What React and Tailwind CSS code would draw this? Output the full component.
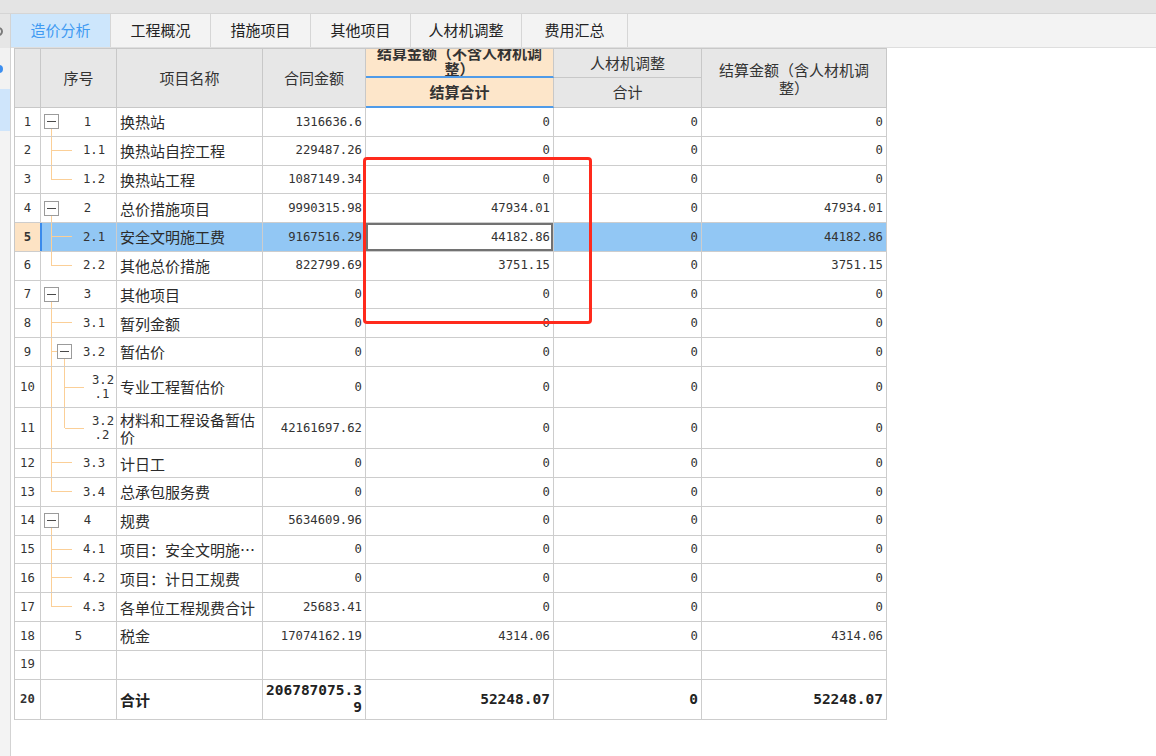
import React from 'react';

const MONO = "font-['DejaVu_Sans_Mono',monospace]";
const CELL = 'border-r border-b border-[#cdcdcd]';
const HEAD = 'border-r border-b border-[#c8c8c8] bg-[#e7e7e7] flex items-center justify-center text-center text-[15px] text-[#333]';
const PEACH = 'border-r border-b-2 border-r-[#c8c8c8] border-b-[#4f9be9] bg-[#fde6ca] flex items-center justify-center text-center text-[15px] font-bold text-[#333] overflow-hidden';

const tabs = [
  { label: '造价分析', w: 'w-[100px]', active: true },
  { label: '工程概况', w: 'w-[100px]' },
  { label: '措施项目', w: 'w-[100px]' },
  { label: '其他项目', w: 'w-[100px]' },
  { label: '人材机调整', w: 'w-[111px]' },
  { label: '费用汇总', w: 'w-[106px]' },
];

// t: root = 一级带折叠框, child = 二级叶子, childBox = 二级带折叠框, grand = 三级叶子, leaf = 一级叶子
const rows = [
  { no: 1, seq: '1', t: 'root', name: '换热站', amt: '1316636.6' },
  { no: 2, seq: '1.1', t: 'child', name: '换热站自控工程', amt: '229487.26' },
  { no: 3, seq: '1.2', t: 'child', last: true, name: '换热站工程', amt: '1087149.34' },
  { no: 4, seq: '2', t: 'root', name: '总价措施项目', amt: '9990315.98', a: '47934.01', c: '47934.01' },
  { no: 5, seq: '2.1', t: 'child', name: '安全文明施工费', amt: '9167516.29', a: '44182.86', c: '44182.86', sel: true },
  { no: 6, seq: '2.2', t: 'child', last: true, name: '其他总价措施', amt: '822799.69', a: '3751.15', c: '3751.15' },
  { no: 7, seq: '3', t: 'root', name: '其他项目', amt: '0' },
  { no: 8, seq: '3.1', t: 'child', name: '暂列金额', amt: '0' },
  { no: 9, seq: '3.2', t: 'childBox', name: '暂估价', amt: '0' },
  { no: 10, seq: ['3.2', '.1'], t: 'grand', name: '专业工程暂估价', amt: '0' },
  { no: 11, seq: ['3.2', '.2'], t: 'grand', last: true, name: '材料和工程设备暂估价', amt: '42161697.62' },
  { no: 12, seq: '3.3', t: 'child', name: '计日工', amt: '0' },
  { no: 13, seq: '3.4', t: 'child', last: true, name: '总承包服务费', amt: '0' },
  { no: 14, seq: '4', t: 'root', name: '规费', amt: '5634609.96' },
  { no: 15, seq: '4.1', t: 'child', name: '项目：安全文明施工费', amt: '0' },
  { no: 16, seq: '4.2', t: 'child', name: '项目：计日工规费', amt: '0' },
  { no: 17, seq: '4.3', t: 'child', last: true, name: '各单位工程规费合计', amt: '25683.41' },
  { no: 18, seq: '5', t: 'leaf', name: '税金', amt: '17074162.19', a: '4314.06', c: '4314.06' },
  { no: 19, t: 'empty', name: '', amt: '', a: '', b: '', c: '' },
  { no: 20, t: 'empty', name: '合计', amt: '206787075.39', a: '52248.07', c: '52248.07', total: true },
];

function TreeLines({ t, last }) {
  const A = 10.5;
  const B = 23.5;
  let segs = [];
  if (t === 'root') {
    segs = [[A, '50%', A, '100%']];
  } else if (t === 'child') {
    segs = [[A, '0', A, last ? '50%' : '100%'], [A, '50%', 31, '50%']];
  } else if (t === 'childBox') {
    segs = [[A, '0', A, '100%'], [A, '50%', 16, '50%'], [B, '50%', B, '100%']];
  } else if (t === 'grand') {
    segs = [[A, '0', A, '100%'], [B, '0', B, last ? '50%' : '100%'], [B, '50%', 43, '50%']];
  }
  if (!segs.length) return null;
  return (
    <svg className="absolute inset-0 h-full w-full" shapeRendering="crispEdges">
      {segs.map(([x1, y1, x2, y2], i) => (
        <line key={i} x1={x1} y1={y1} x2={x2} y2={y2} stroke="#fbcf97" strokeWidth="1" />
      ))}
    </svg>
  );
}

function FoldBox() {
  return (
    <span className="relative flex h-[15px] w-[15px] shrink-0 items-center justify-center border border-[#9b9b9b] bg-white">
      <span className="h-px w-[9px] bg-[#4a4a4a]" />
    </span>
  );
}

function TreeCell({ row }) {
  const { t, seq, last, sel } = row;
  const bg = sel ? 'bg-[#92c7f4]' : 'bg-white';
  return (
    <div className={`${CELL} ${bg} relative flex items-center ${MONO} text-[12.25px] text-[#333]`}>
      {sel && <span className="absolute -left-px top-0 bottom-0 w-[2px] bg-[#3a8aeb]" />}
      <TreeLines t={t} last={last} />
      {t === 'root' && (
        <>
          <span className="ml-[3px]"><FoldBox /></span>
          <span className="relative flex-1 text-center">{seq}</span>
        </>
      )}
      {t === 'childBox' && (
        <>
          <span className="ml-[16px]"><FoldBox /></span>
          <span className="relative flex-1 text-center">{seq}</span>
        </>
      )}
      {t === 'child' && <span className="relative ml-[31px] flex-1 text-center">{seq}</span>}
      {t === 'grand' && (
        <span className="relative ml-[47px] flex flex-1 flex-col items-center leading-[14px]">
          <span className="pl-[2px]">{seq[0]}</span>
          <span>{seq[1]}</span>
        </span>
      )}
      {t === 'leaf' && <span className="relative flex-1 text-center">{seq}</span>}
    </div>
  );
}

function NumCell({ value, sel, total, active }) {
  let bg = sel ? 'bg-[#92c7f4]' : 'bg-white';
  if (active) bg = 'bg-white ring-2 ring-inset ring-[#727272]';
  const font = total
    ? 'text-[14.5px] font-bold leading-[17px] text-[#222]'
    : 'text-[12.25px] text-[#333]';
  return (
    <div className={`${CELL} ${bg} flex items-center justify-end pr-[3px] ${MONO} ${font}`}>
      <span className="min-w-0 break-all text-right">{value}</span>
    </div>
  );
}

function BodyRow({ row }) {
  const { no, name, amt, sel, total } = row;
  const a = row.a ?? '0';
  const b = row.b ?? '0';
  const c = row.c ?? '0';
  const rowBg = sel ? 'bg-[#92c7f4]' : 'bg-white';
  const numBg = sel ? 'bg-[#fde3c4] font-bold' : total ? 'bg-white font-bold' : 'bg-white';
  return (
    <>
      <div className={`${CELL} ${numBg} flex items-center justify-center ${MONO} text-[12.25px] text-[#333]`}>{no}</div>
      <TreeCell row={row} />
      <div
        className={`${CELL} ${rowBg} flex min-w-0 items-center pl-[3px] pr-[2px] text-[15px] leading-[17px] ${
          total ? 'font-bold text-[#222]' : 'text-[#2b2b2b]'
        }`}
      >
        <span className={no === 15 ? 'min-w-0 truncate' : 'min-w-0'}>{name}</span>
      </div>
      <NumCell value={amt} sel={sel} total={total} />
      <NumCell value={a} sel={sel} total={total} active={sel} />
      <NumCell value={b} sel={sel} total={total} />
      <NumCell value={c} sel={sel} total={total} />
    </>
  );
}

function SideStrip() {
  return (
    <div className="flex w-[11px] shrink-0 flex-col overflow-hidden border-r border-[#d3d3d3]">
      <div className="flex h-[34px] items-center bg-[#e6e6e6]">
        <span className="-ml-[6px] h-[9px] w-[9px] shrink-0 rounded-full border-2 border-[#7a7a7a]" />
      </div>
      <div className="flex h-[41px] items-center bg-[#f2f2f2]">
        <span className="-ml-[5px] h-[8px] w-[8px] shrink-0 rounded-full bg-[#3d8ff0]" />
      </div>
      <div className="h-[42px] bg-[#cfe5fb]" />
      <div className="flex-1 bg-[#f3f3f3]" />
    </div>
  );
}

function Tabs() {
  return (
    <div className="flex h-[34px] shrink-0 border-b border-[#dedede] bg-[#f3f3f3]">
      {tabs.map(tab => (
        <div
          key={tab.label}
          className={`${tab.w} flex items-center justify-center border-r border-[#d6d6d6] text-[15px] ${
            tab.active ? 'bg-[#cde6fc] text-[#3f9af2]' : 'text-[#222]'
          }`}
        >
          {tab.label}
        </div>
      ))}
    </div>
  );
}

function CostTable() {
  return (
    <div className="relative grid w-[873px] grid-cols-[26px_76px_146px_103px_188px_148px_185px] grid-rows-[29px_30px_repeat(9,28.75px)_41.2px_41.2px_repeat(8,28.8px)_40.7px] border-l border-t border-[#c8c8c8]">
      {/* 表头 */}
      <div className={`${HEAD} row-span-2`} />
      <div className={`${HEAD} row-span-2`}>序号</div>
      <div className={`${HEAD} row-span-2`}>项目名称</div>
      <div className={`${HEAD} row-span-2`}>合同金额</div>
      <div className={`${PEACH} px-[4px] leading-[16px]`}>
        <span className="-mt-[3px]">
          结算金额（不含人材机调
          <br />
          整）
        </span>
      </div>
      <div className={HEAD}>人材机调整</div>
      <div className={`${HEAD} row-span-2 px-[4px] leading-[18px]`}>
        <span className="pt-[1px]">
          结算金额（含人材机调
          <br />
          整）
        </span>
      </div>
      <div className={PEACH}>结算合计</div>
      <div className={HEAD}>合计</div>

      {rows.map(row => (
        <BodyRow key={row.no} row={row} />
      ))}

      {/* 红色标注框 */}
      <div className="pointer-events-none absolute left-[348px] top-[108px] h-[167px] w-[229px] rounded-[4px] border-[3px] border-[#ff2a1c]" />
    </div>
  );
}

export default function App() {
  return (
    <div className="flex h-[756px] w-[1156px] flex-col overflow-hidden bg-white font-['Noto_Sans_CJK_SC',sans-serif] text-[#2b2b2b]">
      <div className="h-[14px] shrink-0 border-b border-[#d5d5d5] bg-[#e4e4e4]" />
      <div className="flex min-h-0 flex-1">
        <SideStrip />
        <div className="flex min-w-0 flex-1 flex-col">
          <Tabs />
          <div className="pl-[3px]">
            <CostTable />
          </div>
        </div>
      </div>
    </div>
  );
}
